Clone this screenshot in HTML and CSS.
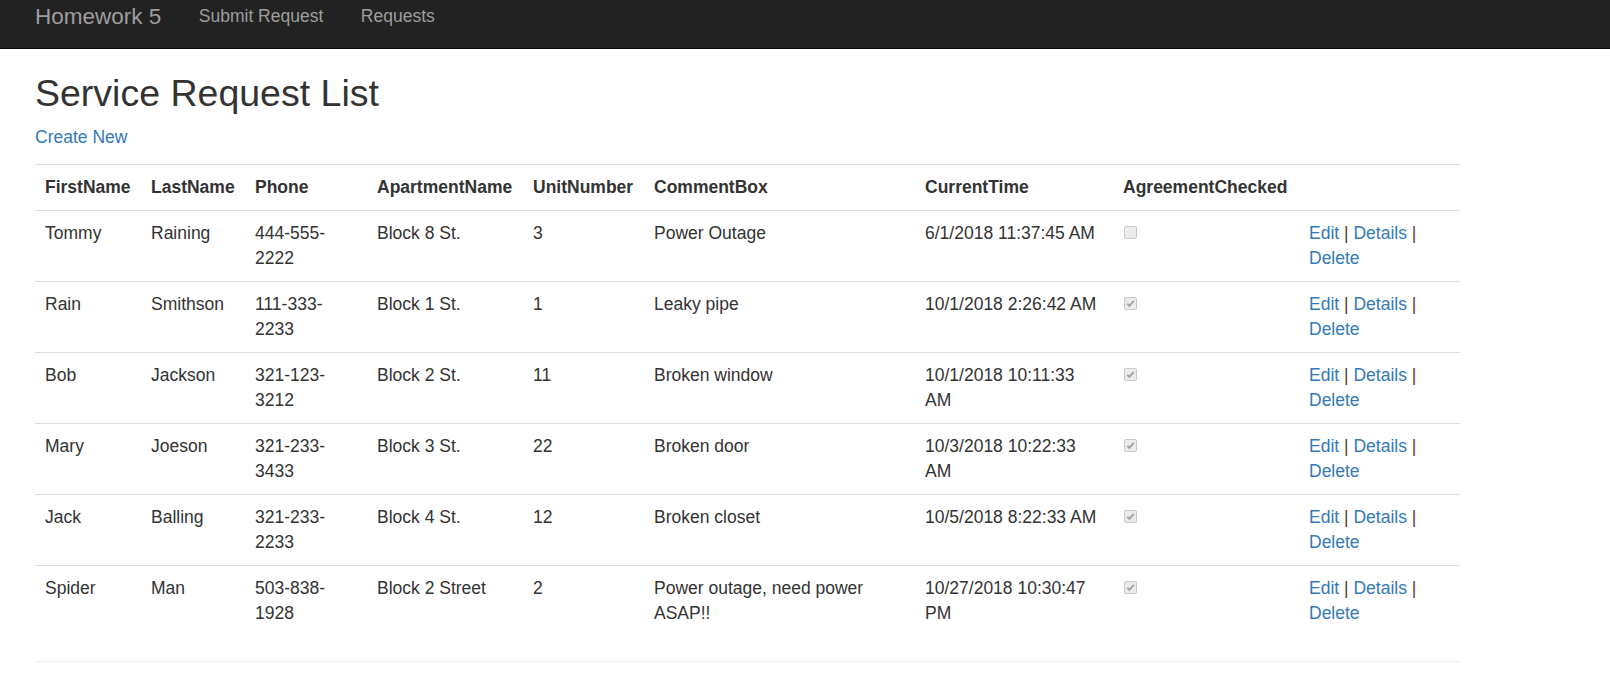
FILE: index.html
```html
<!DOCTYPE html>
<html>
<head>
<meta charset="utf-8">
<title>Service Request List</title>
<link rel="stylesheet" href="styles.css">
</head>
<body>
<nav class="navbar">
  <a class="brand" href="#">Homework 5</a>
  <a class="nav-link" href="#">Submit Request</a>
  <a class="nav-link" href="#">Requests</a>
</nav>
<main class="body-content">
  <h2 class="title">Service Request List</h2>
  <p class="create"><a href="#">Create New</a></p>
  <table class="table">
    <colgroup>
      <col class="c1"><col class="c2"><col class="c3"><col class="c4"><col class="c5"><col class="c6"><col class="c7"><col class="c8"><col class="c9">
    </colgroup>
    <tr>
      <th>FirstName</th><th>LastName</th><th>Phone</th><th>ApartmentName</th><th>UnitNumber</th><th>CommentBox</th><th>CurrentTime</th><th>AgreementChecked</th><th></th>
    </tr>
    <tr>
      <td>Tommy</td><td>Raining</td><td>444-555-2222</td><td>Block 8 St.</td><td>3</td><td>Power Outage</td><td>6/1/2018 11:37:45 AM</td>
      <td><span class="check"></span></td>
      <td><a href="#">Edit</a> <span class="sep">|</span> <a href="#">Details</a> <span class="sep">|</span> <a href="#">Delete</a></td>
    </tr>
    <tr>
      <td>Rain</td><td>Smithson</td><td>111-333-2233</td><td>Block 1 St.</td><td>1</td><td>Leaky pipe</td><td>10/1/2018 2:26:42 AM</td>
      <td><span class="check"><svg viewBox="0 0 13 13" width="13" height="13"><path d="M3.3 6.8 L5.4 8.9 L9.8 3.8" fill="none" stroke="#a3a3a3" stroke-width="2"/></svg></span></td>
      <td><a href="#">Edit</a> <span class="sep">|</span> <a href="#">Details</a> <span class="sep">|</span> <a href="#">Delete</a></td>
    </tr>
    <tr>
      <td>Bob</td><td>Jackson</td><td>321-123-3212</td><td>Block 2 St.</td><td>11</td><td>Broken window</td><td>10/1/2018 10:11:33 AM</td>
      <td><span class="check"><svg viewBox="0 0 13 13" width="13" height="13"><path d="M3.3 6.8 L5.4 8.9 L9.8 3.8" fill="none" stroke="#a3a3a3" stroke-width="2"/></svg></span></td>
      <td><a href="#">Edit</a> <span class="sep">|</span> <a href="#">Details</a> <span class="sep">|</span> <a href="#">Delete</a></td>
    </tr>
    <tr>
      <td>Mary</td><td>Joeson</td><td>321-233-3433</td><td>Block 3 St.</td><td>22</td><td>Broken door</td><td>10/3/2018 10:22:33 AM</td>
      <td><span class="check"><svg viewBox="0 0 13 13" width="13" height="13"><path d="M3.3 6.8 L5.4 8.9 L9.8 3.8" fill="none" stroke="#a3a3a3" stroke-width="2"/></svg></span></td>
      <td><a href="#">Edit</a> <span class="sep">|</span> <a href="#">Details</a> <span class="sep">|</span> <a href="#">Delete</a></td>
    </tr>
    <tr>
      <td>Jack</td><td>Balling</td><td>321-233-2233</td><td>Block 4 St.</td><td>12</td><td>Broken closet</td><td>10/5/2018 8:22:33 AM</td>
      <td><span class="check"><svg viewBox="0 0 13 13" width="13" height="13"><path d="M3.3 6.8 L5.4 8.9 L9.8 3.8" fill="none" stroke="#a3a3a3" stroke-width="2"/></svg></span></td>
      <td><a href="#">Edit</a> <span class="sep">|</span> <a href="#">Details</a> <span class="sep">|</span> <a href="#">Delete</a></td>
    </tr>
    <tr>
      <td>Spider</td><td>Man</td><td>503-838-1928</td><td>Block 2 Street</td><td>2</td><td>Power outage, need power ASAP!!</td><td>10/27/2018 10:30:47 PM</td>
      <td><span class="check"><svg viewBox="0 0 13 13" width="13" height="13"><path d="M3.3 6.8 L5.4 8.9 L9.8 3.8" fill="none" stroke="#a3a3a3" stroke-width="2"/></svg></span></td>
      <td><a href="#">Edit</a> <span class="sep">|</span> <a href="#">Details</a> <span class="sep">|</span> <a href="#">Delete</a></td>
    </tr>
  </table>
  <hr class="rule">
</main>
</body>
</html>
```
FILE: styles.css
```css
html, body {
  margin: 0;
  padding: 0;
  background: #fff;
}
body {
  font-family: "Liberation Sans", Arial, sans-serif;
  font-size: 17.5px;
  line-height: 25px;
  color: #333;
  overflow: hidden;
}
a {
  color: #337ab7;
  text-decoration: none;
}
.navbar {
  display: flex;
  align-items: flex-start;
  height: 48px;
  background: #222;
  border-bottom: 1px solid #080808;
  padding-left: 35px;
}
.brand {
  font-size: 22.5px;
  line-height: 25px;
  padding-top: 4px;
  padding-right: 18.75px;
  color: #9d9d9d;
}
.nav-link {
  font-size: 17.5px;
  line-height: 25px;
  padding: 3.75px 18.75px 0;
  color: #9d9d9d;
}
.body-content {
  padding: 0 35px;
  width: 1425px;
}
.title {
  font-size: 37.5px;
  font-weight: 500;
  line-height: 41.25px;
  margin: 24px 0 10.5px;
  color: #333;
}
.create {
  margin: 0 0 14.5px;
}
.table {
  width: 1425px;
  border-collapse: collapse;
  border-spacing: 0;
  table-layout: fixed;
  margin-bottom: 25px;
}
.c1 { width: 106px; }
.c2 { width: 104px; }
.c3 { width: 122px; }
.c4 { width: 156px; }
.c5 { width: 121px; }
.c6 { width: 271px; }
.c7 { width: 198px; }
.c8 { width: 186px; }
.c9 { width: 161px; }
.table th,
.table td {
  padding: 10px;
  line-height: 25px;
  text-align: left;
  vertical-align: top;
  border-top: 1px solid #ddd;
}
.table th {
  font-weight: bold;
}
.sep {
  color: #5a3a2e;
}
.check {
  display: block;
  width: 11px;
  height: 11px;
  margin-top: 5px;
  margin-left: 1px;
  border: 1px solid #c8c8c8;
  border-radius: 2px;
  background: #ececec;
}
.check svg {
  display: block;
  margin: -1px 0 0 -1px;
}
.rule {
  margin: 25px 0 0;
  border: 0;
  border-top: 1px solid #eee;
  width: 1425px;
}
```
